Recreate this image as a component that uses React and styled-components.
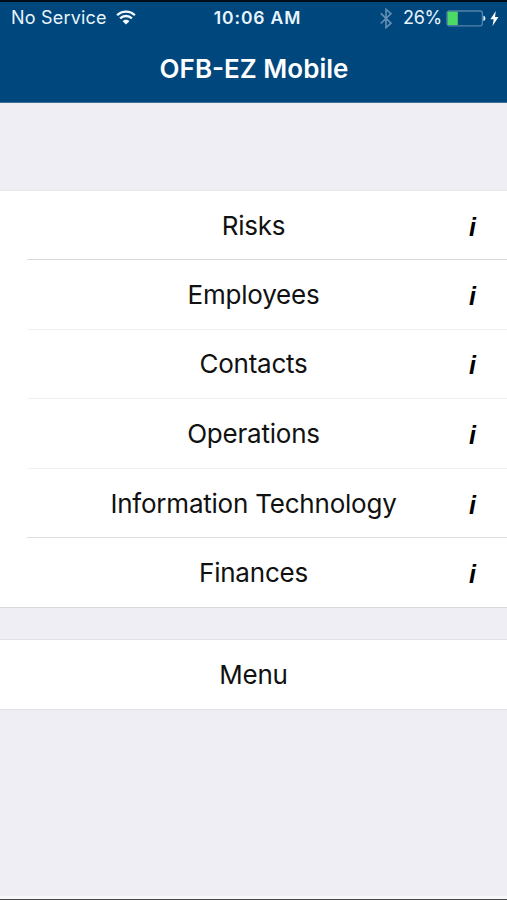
import React from 'react'
import styled, { createGlobalStyle } from 'styled-components'


const App = () => {

  const items = [
    { id: 1, title: "Risks", line: "#dadadc" },
    { id: 2, title: "Employees", line: "#f1f1f2" },
    { id: 3, title: "Contacts", line: "#f1f1f2" },
    { id: 4, title: "Operations", line: "#f1f1f2" },
    { id: 5, title: "Information Technology", line: "#dededf" },
    { id: 6, title: "Finances" },
  ]

  return (
    <>
      <GlobalStyle />
      <Screen>
        <Header>
          <StatusBar>
            <Carrier>
              <span>No Service</span>
              <WifiIcon />
            </Carrier>
            <Clock>10:06 AM</Clock>
            <Power>
              <BluetoothIcon />
              <Percent>26%</Percent>
              <BatteryIcon />
              <BoltIcon />
            </Power>
          </StatusBar>
          <Title>OFB-EZ Mobile</Title>
        </Header>

        <List>
          {items.map((ele) => (
            <Item key={ele.id} $line={ele.line}>
              <Label>{ele.title}</Label>
              <Info>i</Info>
            </Item>
          ))}
        </List>

        <MenuButton>Menu</MenuButton>
        <BottomEdge />
      </Screen>
    </>
  )
}

export default App

const WifiIcon = () => (
  <svg width="20" height="16" viewBox="0 0 20 16" fill="none" stroke="#f4faff" strokeWidth="2.3">
    <path d="M1.1 5.2C6 .3 14 .3 18.9 5.2" />
    <path d="M4.1 8.4C7.4 5.2 12.6 5.2 15.9 8.4" />
    <path d="M10 14.6L6.6 11.2C8.5 9.3 11.5 9.3 13.4 11.2Z" fill="#f4faff" stroke="none" />
  </svg>
)

const BluetoothIcon = () => (
  <svg width="12" height="21" viewBox="0 0 12 21" fill="none" stroke="#668fb5" strokeWidth="1.6">
    <path d="M.8 5.4L11 15.2L6 19.6V1.3L11 5.7L.8 15.5" />
  </svg>
)

const BatteryIcon = () => (
  <svg width="40" height="17" viewBox="0 0 40 17">
    <rect x="1" y="1" width="35.4" height="14.8" rx="2.2" fill="none" stroke="#5484ab" strokeWidth="1.3" />
    <path d="M2.2 1.8H11.8V15H2.2Q1.6 15 1.6 14.2V2.6Q1.6 1.8 2.2 1.8Z" fill="#4cd964" />
    <path d="M37.4 5.8Q39.4 6.2 39.4 8.4T37.4 11Z" fill="#e8f4fc" />
  </svg>
)

const BoltIcon = () => (
  <svg width="9" height="15" viewBox="0 0 9 15">
    <path d="M5.8 0L.4 8.2H3.7L2.5 15L8.5 6H5Z" fill="#fff" />
  </svg>
)

const GlobalStyle = createGlobalStyle`
  body{
    margin: 0;
    background-color: #efeef4;
  }
  *{
    box-sizing: border-box;
  }
`

const Screen = styled.div`
  width: 100%;
  height: 900px;
  display: flex;
  flex-direction: column;
  overflow: hidden;
  background-color: #efeef4;
  color: #111;
  font-family: Inter, "Liberation Sans", sans-serif;
`

const Header = styled.header`
  height: 103px;
  flex-shrink: 0;
  background-color: #00477e;
  border-top: 2px solid #000c18;
  border-bottom: 1px solid #3f6f9b;
  color: #fff;
`

const StatusBar = styled.div`
  height: 32px;
  display: grid;
  grid-template-columns: 1fr auto 1fr;
  align-items: center;
  padding: 0 8px 0 11px;
  font-size: 18px;
  line-height: 32px;
  color: #e8f4fc;
`

const Carrier = styled.div`
  display: flex;
  align-items: center;
  gap: 9px;
  letter-spacing: 0.2px;
`

const Clock = styled.div`
  margin-left: 5px;
  font-weight: 600;
  font-size: 17.5px;
  letter-spacing: 0.85px;
`

const Power = styled.div`
  display: flex;
  align-items: center;
  justify-content: flex-end;
`

const Percent = styled.span`
  margin: 0 4px 0 11px;
  letter-spacing: -0.3px;

  & + svg{
    margin-right: 4px;
  }
`

const Title = styled.h1`
  margin: 0;
  padding-left: 1px;
  text-align: center;
  font-size: 26px;
  font-weight: 600;
  line-height: 69px;
`

const List = styled.ul`
  margin: 87px 0 0;
  padding: 0;
  list-style: none;
  height: 418px;
  flex-shrink: 0;
  display: flex;
  flex-direction: column;
  background-color: #fff;
  border-top: 1px solid #e6e6e9;
  border-bottom: 1px solid #d9d9dc;
`

const Item = styled.li`
  flex: 1;
  margin-left: 27px;
  padding-right: 27px;
  display: grid;
  grid-template-columns: 1fr 0;
  align-items: center;
  border-bottom: ${(props) => (props.$line ? `1px solid ${props.$line}` : "none")};

  &:first-child{
    flex: 0 0 69px;
  }
`

const Label = styled.span`
  padding-top: 1px;
  text-align: center;
  font-size: 26px;
  line-height: 32px;
  letter-spacing: -0.22px;
`

const Info = styled.span`
  justify-self: end;
  margin-right: 4px;
  padding-top: 3px;
  font-family: "Liberation Sans", sans-serif;
  font-size: 25px;
  font-weight: 700;
  font-style: italic;
  line-height: 32px;
  color: #000;
`

const MenuButton = styled.button`
  margin: 31px 0 0;
  padding: 0;
  height: 71px;
  flex-shrink: 0;
  border: solid #e2e2e5;
  border-width: 1px 0;
  background-color: #fff;
  color: inherit;
  font: inherit;
  font-size: 26px;
  letter-spacing: -0.22px;
`

const BottomEdge = styled.div`
  margin-top: auto;
  height: 4px;
  background-color: #f7f7f9;
  border-bottom: 1px solid #48484a;
`
